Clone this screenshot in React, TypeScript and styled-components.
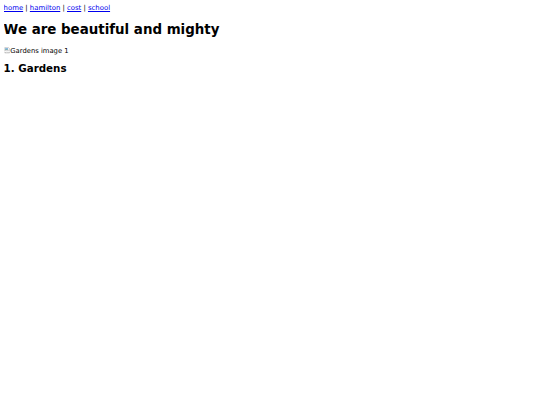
import styled, { createGlobalStyle } from "styled-components";

const GlobalStyle = createGlobalStyle`
  body {
    margin: 3.9px 3.6px;
    background: #ffffff;
    color: #000000;
    font-family: "DejaVu Sans", sans-serif;
    font-size: 6.9px;
  }
`;

const Nav = styled.div`
  font-size: 6.9px;
`;

const NavLink = styled.a`
  color: #0000ee;
  text-decoration: underline;
`;

const Title = styled.h1`
  font-size: 13.4px;
  font-weight: bold;
  margin: 10px 0 9.8px;
`;

const Figure = styled.p`
  margin: 9.8px 0 7.8px;
  display: flex;
  align-items: center;
  gap: 0.3px;
  font-size: 6.8px;
`;

const BrokenIcon = styled.svg`
  width: 6.4px;
  height: 6.4px;
  flex-shrink: 0;
`;

const Heading = styled.h2`
  font-size: 10.3px;
  font-weight: bold;
  margin: 7.8px 0;
`;

const links = ["home", "hamilton", "cost", "school"];

export default function App() {
  return (
    <>
      <GlobalStyle />
      <Nav>
        {links.map((l, i) => (
          <span key={l}>
            {i > 0 && " | "}
            <NavLink href="#">{l}</NavLink>
          </span>
        ))}
      </Nav>
      <Title>We are beautiful and mighty</Title>
      <Figure>
        <BrokenIcon viewBox="0 0 16 16">
          <path d="M2 1h9l3 3v5l-2-1-2 2-2-2-2 2-2-2-2 2V1z" fill="#f4f4f4" stroke="#9a9a9a" strokeWidth="1" />
          <rect x="3" y="3" width="7" height="4" fill="#6fa8dc" />
          <path d="M3 7l2-2 2 2 2-1 1 1v0H3z" fill="#6aa84f" />
          <path d="M2 12l2 2 2-2 2 2 2-2 2 2 2-2v3H2z" fill="#f4f4f4" stroke="#9a9a9a" strokeWidth="1" />
        </BrokenIcon>
        Gardens image 1
      </Figure>
      <Heading>1. Gardens</Heading>
    </>
  );
}
